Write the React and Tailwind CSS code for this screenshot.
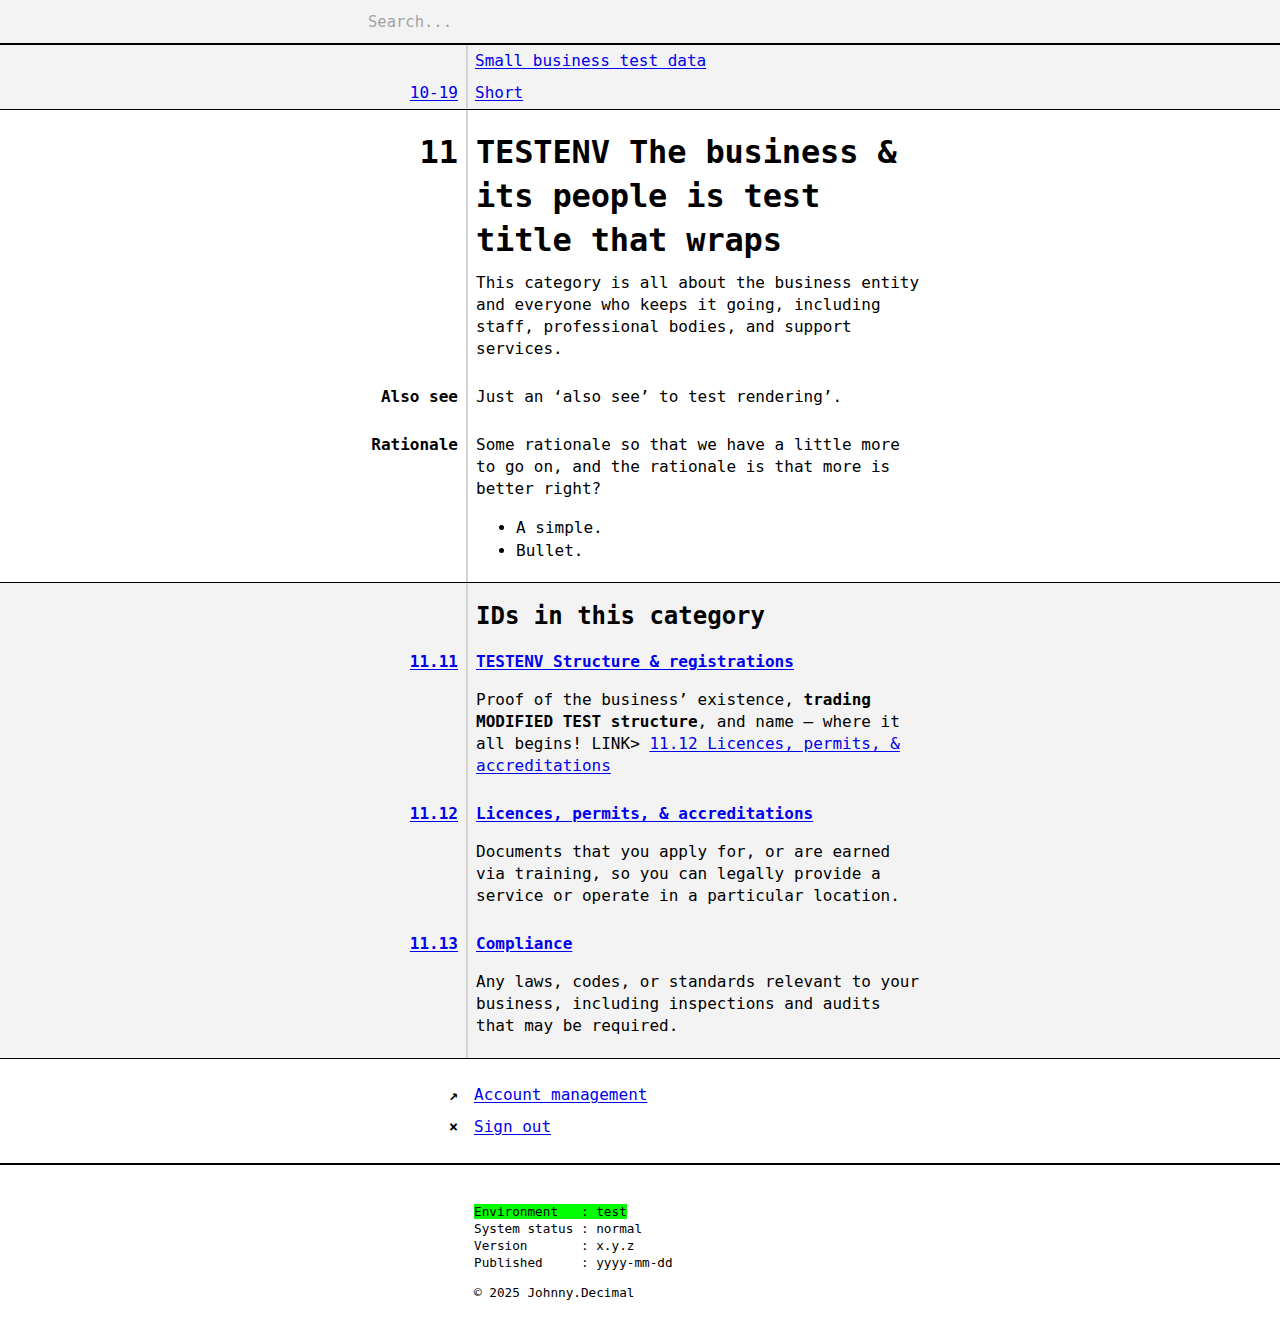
const mono = { fontFamily: '"DejaVu Sans Mono", "Liberation Mono", monospace' }

// Both cells get the padding so the divider runs unbroken from row to row
function Row({ label, children, className = '' }) {
  return (
    <div className="grid grid-cols-[466px_1fr]">
      <div className={`pr-2 text-right ${className}`}>{label}</div>
      <div className={`border-l-2 border-[#d4d4d4] pl-2 ${className}`}>
        <div className="w-[448px]">{children}</div>
      </div>
    </div>
  )
}

function Link({ children, bold }) {
  return (
    <a href="#" className={`text-[#0000ee] underline underline-offset-2 ${bold ? 'font-bold' : ''}`}>
      {children}
    </a>
  )
}

function IdItem({ id, title, children, last }) {
  return (
    <>
      <Row label={<Link bold>{id}</Link>}>
        <Link bold>{title}</Link>
      </Row>
      <Row className={`pt-4 ${last ? 'pb-[21px]' : 'pb-[26px]'}`}>{children}</Row>
    </>
  )
}

export default function App() {
  return (
    <div style={mono} className="min-h-[1335px] bg-white text-black text-[16px] leading-[22px]">
      <div className="h-[45px] bg-[#f3f3f3] border-b-2 border-black flex items-center">
        <input
          placeholder="Search..."
          className="ml-[368px] w-[400px] bg-transparent outline-none placeholder:text-[#a3a3a3] text-[15.5px]"
          style={mono}
        />
      </div>

      <nav className="bg-[#f3f3f3] border-b border-black">
        <Row className="pt-[5px] pb-[10px]"><span className="-ml-px"><Link>Small business test data</Link></span></Row>
        <Row label={<Link>10-19</Link>} className="pb-[5px]"><span className="-ml-px"><Link>Short</Link></span></Row>
      </nav>

      <main className="border-b border-black">
        <Row
          className="pt-5"
          label={<span className="text-[32px] leading-[44px] font-bold">11</span>}
        >
          <h1 className="text-[32px] leading-[44px] font-bold tracking-[-0.15px]">
            TESTENV The business &amp; its people is test title that wraps
          </h1>
        </Row>
        <Row className="pt-[10px]">
          <p>
            This category is all about the business entity and everyone who keeps it going, including
            staff, professional bodies, and support services.
          </p>
        </Row>
        <Row className="pt-[26px]" label={<span className="font-bold">Also see</span>}>
          <p>Just an ‘also see’ to test rendering’.</p>
        </Row>
        <Row className="pt-[26px] pb-[20px]" label={<span className="font-bold">Rationale</span>}>
          <p>
            Some rationale so that we have a little more to go on, and the rationale is that more is
            better right?
          </p>
          <ul className="mt-4 pl-10 list-disc leading-[23px]">
            <li>A simple.</li>
            <li>Bullet.</li>
          </ul>
        </Row>
      </main>

      <section className="bg-[#f3f3f3] border-b border-black">
        <Row className="pt-[17px] pb-[19px]">
          <h2 className="text-[24px] leading-[32px] font-bold">IDs in this category</h2>
        </Row>
        <IdItem id="11.11" title="TESTENV Structure & registrations">
          <p>
            Proof of the business’ existence, <b>trading MODIFIED TEST structure</b>, and name – where it
            all begins! LINK&gt; <Link>11.12 Licences, permits, &amp; accreditations</Link>
          </p>
        </IdItem>
        <IdItem id="11.12" title="Licences, permits, & accreditations">
          <p>
            Documents that you apply for, or are earned via training, so you can legally provide a service
            or operate in a particular location.
          </p>
        </IdItem>
        <IdItem id="11.13" title="Compliance" last>
          <p>
            Any laws, codes, or standards relevant to your business, including inspections and audits
            that may be required.
          </p>
        </IdItem>
      </section>

      <footer>
        <div className="pt-[25px] pb-[25px] border-b-2 border-black flex flex-col gap-[10px]">
          <div className="grid grid-cols-[466px_1fr]">
            <div className="pr-2 text-right text-[15px] font-bold">↗</div>
            <div className="pl-2"><Link>Account management</Link></div>
          </div>
          <div className="grid grid-cols-[466px_1fr]">
            <div className="pr-2 text-right text-[15px] font-bold">×</div>
            <div className="pl-2"><Link>Sign out</Link></div>
          </div>
        </div>
        <div className="pl-[474px] pt-[38px] pb-[33px] text-[12.7px] leading-[17px] whitespace-pre">
          <div><span className="bg-[#00ff00]">Environment   : test</span></div>
          <div>System status : normal</div>
          <div>Version       : x.y.z</div>
          <div>Published     : yyyy-mm-dd</div>
          <div className="mt-[13px]">© 2025 Johnny.Decimal</div>
        </div>
      </footer>
    </div>
  )
}
